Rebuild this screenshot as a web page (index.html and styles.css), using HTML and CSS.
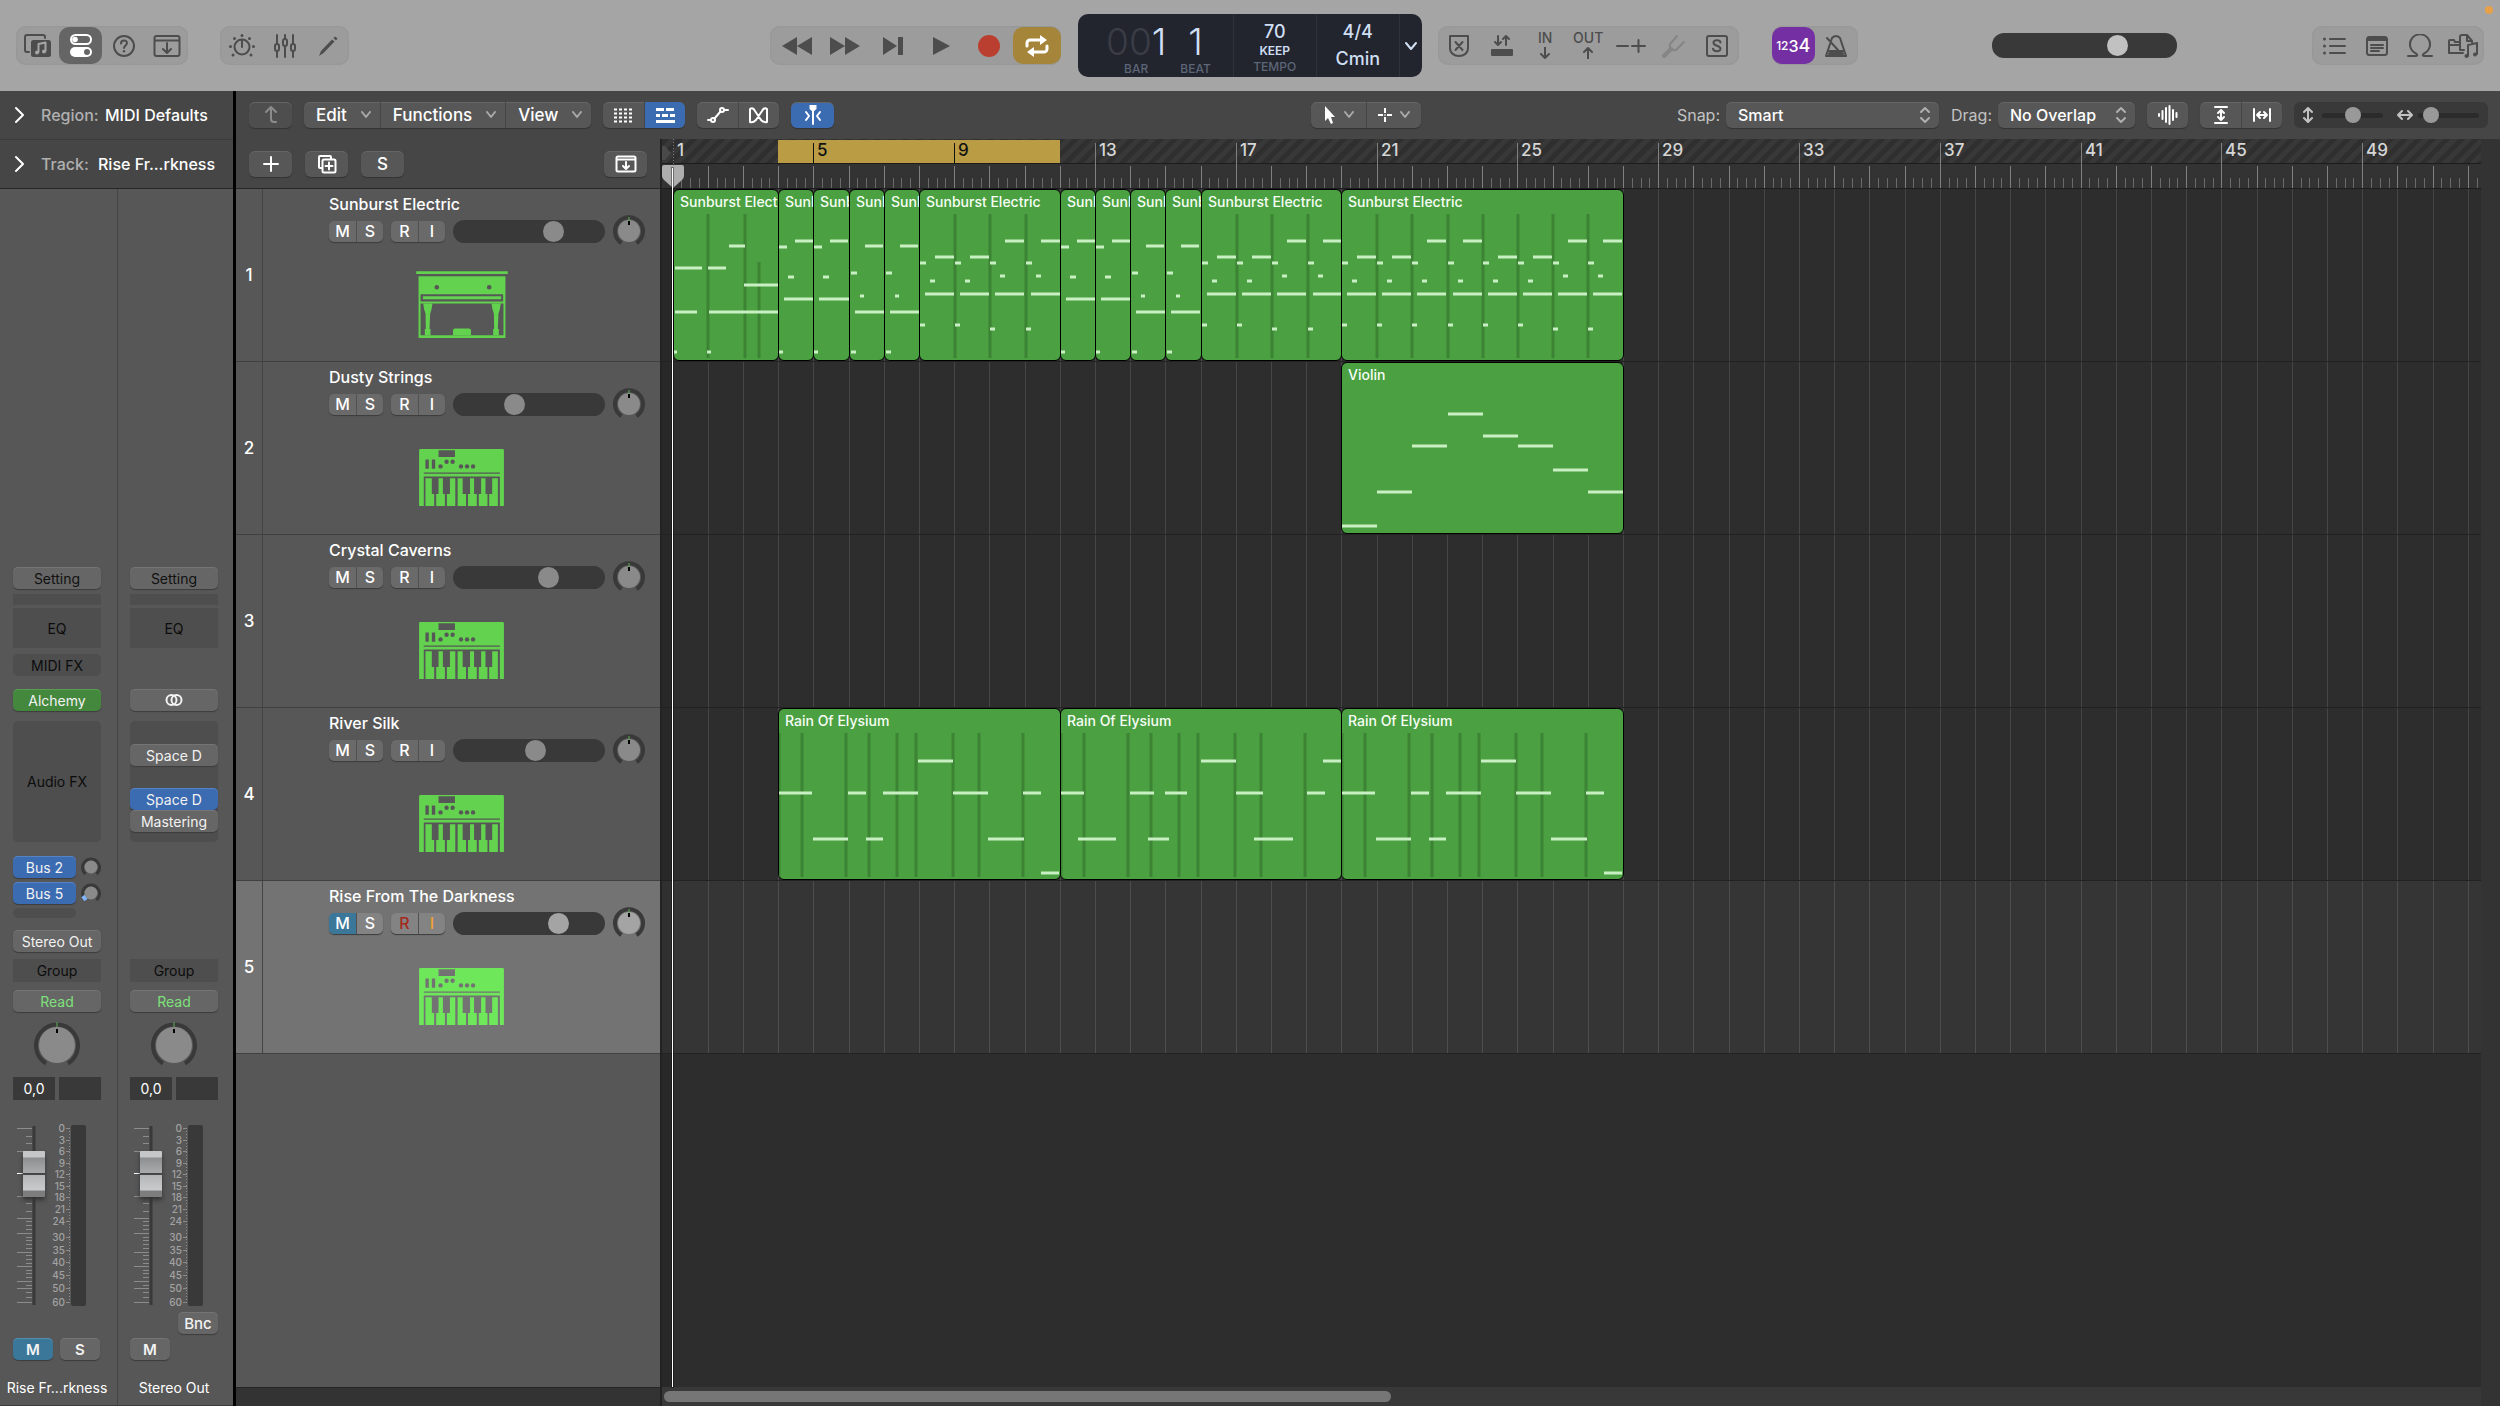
FILE: index.html
```html
<!DOCTYPE html>
<html lang="en">
<head>
  <meta charset="UTF-8">
  <meta name="viewport" content="width=device-width, initial-scale=1.0">
  <title>Tracks</title>
  <link rel="stylesheet" href="styles.css">
</head>
<body>
  <header class="control-bar">
    <div class="group">
      <button aria-label="Library">
        <svg class="icon" width="28" height="24" viewBox="0 0 28 24"><path d="M5 18H3a2 2 0 0 1-2-2V3a2 2 0 0 1 2-2h16a2 2 0 0 1 2 2v1"/><rect class="solid" x="7" y="6" width="20" height="17" rx="2.5"/><path class="knock" d="M14.5 18v-8l7-1.5V17"/><circle class="knock-fill" cx="13" cy="18.5" r="2"/><circle class="knock-fill" cx="20" cy="17.5" r="2"/></svg>
      </button>
      <button class="active" aria-label="Inspector">
        <svg class="icon" width="24" height="24" viewBox="0 0 24 24"><rect x="2" y="1" width="20" height="9" rx="4.5"/><circle class="solid" cx="6" cy="5.5" r="2.8"/><rect class="solid" x="1" y="13" width="22" height="10" rx="5"/><circle class="knock-fill" cx="18" cy="18" r="3"/></svg>
      </button>
      <button aria-label="Quick Help">
        <svg class="icon" width="24" height="24" viewBox="0 0 24 24"><circle cx="12" cy="12" r="10"/><path d="M9 9.5c0-4 6-4 6-.5 0 2.3-3 2.5-3 5"/><circle class="solid" cx="12" cy="17.2" r="1.2"/></svg>
      </button>
      <button aria-label="Toolbar">
        <svg class="icon" width="28" height="24" viewBox="0 0 28 24"><rect x="1.5" y="2" width="25" height="20" rx="2"/><path d="M2 6.5h24M14 9v10M10 15l4 4 4-4"/></svg>
      </button>
    </div>
    <div class="group group-second">
      <button aria-label="Smart Controls">
        <svg class="icon" width="28" height="24" viewBox="0 0 28 24"><circle cx="14" cy="13" r="7.5"/><path d="M14 13V6"/><path class="dots" d="M14 1.5v0M6.5 4.5v0M21.5 4.5v0M2.5 12.5v0M25.5 12.5v0M5 21v0M23 21v0"/></svg>
      </button>
      <button aria-label="Mixer">
        <svg class="icon" width="24" height="24" viewBox="0 0 24 24"><path d="M4 1v9M4 17v6M12 1v4M12 12v11M20 1v9M20 17v6"/><rect x="2" y="10" width="4" height="7" rx="2"/><rect x="10" y="5" width="4" height="7" rx="2"/><rect x="18" y="10" width="4" height="7" rx="2"/></svg>
      </button>
      <button aria-label="Editors">
        <svg class="icon" width="24" height="24" viewBox="0 0 24 24"><path class="solid" d="M3 22l2-5L16 5.5l2.5 2L7.5 19zM17.5 4l1.500-1.5 2.5 2L20 6.5z"/></svg>
      </button>
    </div>
    <div class="space space-wide"></div>
    <div class="group transport">
      <button aria-label="Rewind"><svg class="icon" width="30" height="20" viewBox="0 0 30 20"><path class="solid" d="M15 1v18L0 10zM30 1v18L15 10z"/></svg></button>
      <button aria-label="Forward"><svg class="icon" width="30" height="20" viewBox="0 0 30 20"><path class="solid" d="M0 1v18l15-9zM15 1v18l15-9z"/></svg></button>
      <button aria-label="Go to End"><svg class="icon" width="22" height="20" viewBox="0 0 22 20"><path class="solid" d="M1 1v18l14-9zM16 1h5v18h-5z"/></svg></button>
      <button aria-label="Play"><svg class="icon" width="18" height="20" viewBox="0 0 18 20"><path class="solid" d="M1 1v18l17-9z"/></svg></button>
      <button aria-label="Record"><svg width="22" height="22" viewBox="0 0 22 22"><circle cx="11" cy="11" r="11" fill="#bb3f30"/></svg></button>
      <button class="cycle" aria-label="Cycle"><svg class="icon heavy" width="26" height="22" viewBox="0 0 26 22"><path d="M3 11V8a3 3 0 0 1 3-3h11M23 11v3a3 3 0 0 1-3 3H9"/><path class="solid" d="M16 0l7 5-7 5zM10 12l-7 5 7 5z"/></svg></button>
    </div>
    <div class="lcd">
      <div class="lcd-position">
        <div class="lcd-field"><b><i>00</i>1</b><span>BAR</span></div>
        <div class="lcd-field"><b>1</b><span>BEAT</span></div>
      </div>
      <div class="lcd-tempo"><b>70</b><em>KEEP</em><span>TEMPO</span></div>
      <div class="lcd-key"><b>4/4</b><b>Cmin</b></div>
      <button class="lcd-menu" aria-label="Display Mode"><svg class="icon" width="14" height="10" viewBox="0 0 14 10"><path d="M2 2l5 6 5-6"/></svg></button>
    </div>
    <div class="group group-modes">
      <button aria-label="Replace"><svg class="icon" width="24" height="24" viewBox="0 0 24 24"><path d="M3 2h18v12c0 5-4 8-9 8s-9-3-9-8zM8.5 8l7 8M15.5 8l-7 8"/></svg></button>
      <button aria-label="Autopunch"><svg class="icon" width="24" height="24" viewBox="0 0 24 24"><path d="M8 2v9M5 8l3 3 3-3M16 11V2M13 5l3-3 3 3"/><rect class="solid" x="1" y="15" width="22" height="7" rx="1"/></svg></button>
      <button class="text-icon">IN<svg class="icon" width="12" height="12" viewBox="0 0 12 12"><path d="M6 0v11M2 7l4 4 4-4"/></svg></button>
      <button class="text-icon">OUT<svg class="icon" width="12" height="12" viewBox="0 0 12 12"><path d="M6 12V1M2 5l4-4 4 4"/></svg></button>
      <button aria-label="Varispeed"><svg class="icon" width="30" height="24" viewBox="0 0 30 24"><path d="M1 12h11M16 12h13M22.5 6v12"/></svg></button>
      <button class="dim" aria-label="Tuner"><svg class="icon" width="24" height="24" viewBox="0 0 24 24"><path d="M9 15l-1-2q-1-2 1-4l6-7M9 15l2 1q2 1 4-1l7-7"/><path class="thick" d="M2 22l7-7"/></svg></button>
      <button aria-label="Solo"><svg class="icon" width="24" height="24" viewBox="0 0 24 24"><rect x="2" y="2" width="20" height="20" rx="2"/><path d="M15.5 8.5c-.5-3-7-3-7 .2 0 3.5 7 2.5 7 6 0 3.5-7 3.3-7.5 0"/></svg></button>
    </div>
    <div class="group group-click">
      <button class="count-in" aria-label="Count In"><small>12</small>3<big>4</big></button>
      <button aria-label="Metronome"><svg class="icon" width="24" height="24" viewBox="0 0 24 24"><path d="M2 22l6-18q4-4 8 0l6 18zM4 17h16M14 16L3 4"/><path class="thick" d="M6 20h12"/></svg></button>
    </div>
    <div class="space"></div>
    <input class="volume master" type="range" aria-label="Master Volume" value="70">
    <div class="space"></div>
    <div class="group">
      <button aria-label="List Editors"><svg class="icon" width="24" height="20" viewBox="0 0 24 20"><path d="M8 3h15M8 10h15M8 17h15"/><path class="dots" d="M2.5 3v0M2.5 10v0M2.5 17v0"/></svg></button>
      <button aria-label="Note Pad"><svg class="icon" width="24" height="24" viewBox="0 0 24 24"><rect x="2" y="3" width="20" height="18" rx="2.5"/><path class="solid" d="M2 3h20v4H2z"/><path d="M6 11h12M6 14h12M6 17h8"/></svg></button>
      <button aria-label="Loop Browser"><svg class="icon" width="26" height="24" viewBox="0 0 26 24"><path d="M1 22h7q4 0 1-2.5a10 10 0 1 1 8 0q-3 2.5 1 2.5h7"/></svg></button>
      <button aria-label="Browsers"><svg class="icon" width="32" height="26" viewBox="0 0 32 26"><path d="M12 9H8L7 7H3a1 1 0 0 0-1 1v12h14M2 12h10M13 17V4a2 2 0 0 1 2-2h5l5 6v2M20 2v6h5M13 17h4M21 23v-11l9-2v11"/><circle class="solid" cx="19.5" cy="23" r="2"/><circle class="solid" cx="28" cy="21.5" r="2"/></svg></button>
    </div>
    <span class="mic-dot"></span>
  </header>

  <div class="workspace">
    <aside class="inspector">
      <button class="disclosure"><svg class="icon" width="10" height="18" viewBox="0 0 10 18"><path d="M1 2l7 7-7 7"/></svg><span>Region:</span> MIDI Defaults</button>
      <button class="disclosure"><svg class="icon" width="10" height="18" viewBox="0 0 10 18"><path d="M1 2l7 7-7 7"/></svg><span class="track-label">Track:</span> Rise Fr...rkness</button>
      <div class="strips">
        <section class="strip">
          <button class="slot setting">Setting</button>
          <div class="gain-meter"></div>
          <button class="well eq">EQ</button>
          <button class="slot well midi-fx">MIDI FX</button>
          <button class="slot instrument green">Alchemy</button>
          <button class="well audio-fx">Audio FX</button>
          <div class="sends">
            <button class="slot blue">Bus 2</button>
            <svg width="20" height="20" viewBox="0 0 20 20"><path class="ring" d="M4.5 17A8.5 8.5 0 1 1 15.5 17"/><circle class="cap" cx="10" cy="10" r="6.5"/></svg>
            <button class="slot blue">Bus 5</button>
            <svg width="20" height="20" viewBox="0 0 20 20"><path class="ring" d="M4.5 17A8.5 8.5 0 1 1 15.5 17"/><path class="ring-lit" d="M5 17L2 13"/><circle class="cap" cx="10" cy="10" r="6.5"/></svg>
            <div class="well empty-send"></div>
          </div>
          <button class="slot output">Stereo Out</button>
          <button class="well group-slot">Group</button>
          <button class="slot read">Read</button>
          <svg class="pan" width="46" height="46" viewBox="0 0 46 46"><path class="ring wide" d="M12 41.5A21 21 0 1 1 34 41.5"/><circle class="cap" cx="23" cy="23" r="18"/><path class="center-mark" d="M23 0v5"/><path class="needle" d="M23 7v4"/></svg>
          <div class="readouts"><output>0,0</output><output></output></div>
          <div class="fader-row"></div>
          <div class="bounce-row"></div>
          <div class="mute-row"><button class="slot teal">M</button><button class="slot">S</button></div>
          <p class="strip-name">Rise Fr...rkness</p>
        </section>
        <section class="strip">
          <button class="slot setting">Setting</button>
          <div class="gain-meter"></div>
          <button class="well eq">EQ</button>
          <div class="midi-fx"></div>
          <button class="slot instrument" aria-label="Stereo"><svg class="icon" width="18" height="12" viewBox="0 0 18 12"><circle cx="6.5" cy="6" r="5"/><circle cx="11.5" cy="6" r="5"/></svg></button>
          <div class="well audio-fx inserts">
            <button class="slot">Space D</button>
            <button class="slot blue second">Space D</button>
            <button class="slot">Mastering</button>
          </div>
          <div class="sends"></div>
          <div class="output"></div>
          <button class="well group-slot">Group</button>
          <button class="slot read">Read</button>
          <svg class="pan" width="46" height="46" viewBox="0 0 46 46"><path class="ring wide" d="M12 41.5A21 21 0 1 1 34 41.5"/><circle class="cap" cx="23" cy="23" r="18"/><path class="center-mark" d="M23 0v5"/><path class="needle" d="M23 7v4"/></svg>
          <div class="readouts"><output>0,0</output><output></output></div>
          <div class="fader-row"></div>
          <div class="bounce-row"><button class="slot">Bnc</button></div>
          <div class="mute-row"><button class="slot">M</button></div>
          <p class="strip-name">Stereo Out</p>
        </section>
      </div>
    </aside>

    <main class="tracks-area">
      <div class="menu-bar">
        <button class="tool single faded" aria-label="Up"><svg class="icon" width="20" height="20" viewBox="0 0 20 20"><path d="M10 2v12q0 3 3 3h2M5 7l5-5 5 5"/></svg></button>
        <div class="tools menus">
          <button>Edit<svg class="icon" width="10" height="8" viewBox="0 0 10 8"><path d="M1 1l4 5 4-5"/></svg></button>
          <button>Functions<svg class="icon" width="10" height="8" viewBox="0 0 10 8"><path d="M1 1l4 5 4-5"/></svg></button>
          <button>View<svg class="icon" width="10" height="8" viewBox="0 0 10 8"><path d="M1 1l4 5 4-5"/></svg></button>
        </div>
        <div class="tools">
          <button aria-label="Grid View"><svg class="icon dashed" width="19" height="15" viewBox="0 0 19 15"><path d="M0 1.5h19M0 5.5h19M0 9.5h19M0 13.5h19"/></svg></button>
          <button class="on" aria-label="Track View"><svg class="icon rows" width="19" height="15" viewBox="0 0 19 15"><path d="M0 1.5h8M10 1.5h8M0 7.5h4M6 7.5h6M14 7.5h5M0 13.5h19"/></svg></button>
        </div>
        <div class="tools">
          <button aria-label="Automation"><svg class="icon" width="22" height="18" viewBox="0 0 22 18"><circle cx="6" cy="14" r="2"/><circle cx="15" cy="4" r="2"/><path d="M1 14h3M7.5 12.5l6-7M17 4h4"/></svg></button>
          <button aria-label="Flex"><svg class="icon" width="22" height="18" viewBox="0 0 22 18"><path d="M2 16V3q3-2 5 2l6 9q3 3 6 2V3q-3-2-5 2l-6 9q-3 3-6 2z"/></svg></button>
        </div>
        <button class="tool single on" aria-label="Catch Playhead"><svg class="icon" width="20" height="20" viewBox="0 0 20 20"><path class="solid" d="M6.5 0h7v4L10 7 6.5 4z"/><path d="M10 5v14M3 7l3 4-3 4M17 7l-3 4 3 4"/></svg></button>
        <div class="space space-left"></div>
        <div class="tools pointer-tools">
          <button aria-label="Left-click Tool"><svg width="12" height="20" viewBox="0 0 12 20"><path fill="#fff" d="M1 1v15l3-3 3 6 2-1-2-6h4z"/></svg><svg class="icon" width="10" height="8" viewBox="0 0 10 8"><path d="M1 1l4 5 4-5"/></svg></button>
          <button aria-label="Command-click Tool"><svg class="icon bright" width="14" height="14" viewBox="0 0 14 14"><path d="M7 0v5M7 9v5M0 7h5M9 7h5M6.5 7h1"/></svg><svg class="icon" width="10" height="8" viewBox="0 0 10 8"><path d="M1 1l4 5 4-5"/></svg></button>
        </div>
        <div class="space space-right"></div>
        <label for="snap">Snap:</label>
        <div class="select-box snap">
          <select id="snap"><option>Smart</option></select>
          <svg class="icon" width="12" height="18" viewBox="0 0 12 18"><path d="M2 6l4-4 4 4M2 12l4 4 4-4"/></svg>
        </div>
        <label for="drag">Drag:</label>
        <div class="select-box drag">
          <select id="drag"><option>No Overlap</option></select>
          <svg class="icon" width="12" height="18" viewBox="0 0 12 18"><path d="M2 6l4-4 4 4M2 12l4 4 4-4"/></svg>
        </div>
        <button class="tool single waveform" aria-label="Waveform Zoom"><svg class="icon" width="20" height="20" viewBox="0 0 20 20"><path d="M1 9v2M4.5 6v8M8 3v14M11.5 1v18M15 5v10M18.5 8v4"/></svg></button>
        <div class="tools">
          <button aria-label="Fit Vertical"><svg class="icon" width="16" height="20" viewBox="0 0 16 20"><path d="M2 2h12M2 18h12M8 5v10M5 8l3-3 3 3M5 12l3 3 3-3"/></svg></button>
          <button aria-label="Fit Horizontal"><svg class="icon" width="20" height="14" viewBox="0 0 20 14"><path d="M2 1v12M18 1v12M5 7h10M8 4L5 7l3 3M12 4l3 3-3 3"/></svg></button>
        </div>
        <div class="zoomers">
          <label for="zoom-v" aria-label="Vertical Zoom"><svg class="icon" width="12" height="16" viewBox="0 0 12 16"><path d="M6 2v12M2 5l4-4 4 4M2 11l4 4 4-4"/></svg></label>
          <input id="zoom-v" type="range" value="52">
          <label for="zoom-h" aria-label="Horizontal Zoom"><svg class="icon" width="16" height="12" viewBox="0 0 16 12"><path d="M2 6h12M5 2L1 6l4 4M11 2l4 4-4 4"/></svg></label>
          <input id="zoom-h" type="range" value="10">
        </div>
      </div>

      <div class="headers">
        <div class="header-tools">
          <button class="tool single" aria-label="New Track"><svg class="icon" width="16" height="16" viewBox="0 0 16 16"><path d="M8 1v14M1 8h14"/></svg></button>
          <button class="tool single" aria-label="Duplicate Track"><svg class="icon" width="20" height="20" viewBox="0 0 20 20"><path d="M5 14H3a1 1 0 0 1-1-1V3a1 1 0 0 1 1-1h10a1 1 0 0 1 1 1v2"/><rect x="5.5" y="5.5" width="13" height="13" rx="1.5"/><path d="M12 8.5v7M8.5 12h7"/></svg></button>
          <button class="tool single">S</button>
          <button class="tool single header-config" aria-label="Track Header Components"><svg class="icon" width="22" height="18" viewBox="0 0 22 18"><rect x="1.5" y="1.5" width="19" height="15" rx="1.5"/><path d="M2 4.5h18M11 7v7M8 11l3 3 3-3"/></svg></button>
        </div>
        <div class="track-list" id="track-list"></div>
        <div class="headers-foot"></div>
      </div>

      <div class="timeline">
        <svg class="ruler" id="ruler" width="100%" height="50"></svg>
        <div class="lanes" id="lanes"></div>
        <div class="playhead"><svg width="24" height="24" viewBox="0 0 24 24"><path fill="#adadad" d="M3 1h18q2 0 2 2v9q0 2-2 4l-9 8-9-8q-2-2-2-4V3q0-2 2-2z"/></svg></div>
        <div class="scroll-row"><div class="scroll-thumb"></div></div>
      </div>
      <div class="side-scroll"></div>
    </main>
  </div>
  <script src="script.js"></script>
</body>
</html>
```

FILE: styles.css
```css
* {
  box-sizing: border-box;
}
body {
  margin: 0;
  min-height: 100vh;
  display: flex;
  flex-direction: column;
  background: #2d2d2d;
  color: #fff;
  font-family: Inter, "Liberation Sans", sans-serif;
  font-size: 17px;
  font-weight: 500;
  overflow: hidden;
}
button,
select {
  margin: 0;
  padding: 0;
  border: none;
  background: none;
  color: inherit;
  font: inherit;
}
svg {
  display: block;
  flex: none;
}
.icon {
  fill: none;
  stroke: currentColor;
  stroke-width: 2;
  stroke-linecap: round;
  stroke-linejoin: round;
}
.icon .solid {
  fill: currentColor;
  stroke: none;
}
.icon .dots {
  stroke-width: 3;
}
.icon .thick {
  stroke-width: 4;
}

/* control bar */
.control-bar {
  position: relative;
  display: flex;
  align-items: center;
  height: 91px;
  padding: 0 16px;
  background: #a5a5a5;
}
.group {
  display: flex;
  height: 39px;
  background: #9c9c9c;
  border-radius: 10px;
  box-shadow: inset 0 0 2px #8e8e8e;
}
.group button {
  width: 43px;
  margin: 1px 0;
  display: flex;
  align-items: center;
  justify-content: center;
  border-radius: 10px;
  color: #4d4d4d;
}
.group .active {
  background: #656565;
  color: #fff;
}
.knock {
  stroke: #a5a5a5;
}
.knock-fill {
  fill: #a5a5a5;
  stroke: none;
}
.active .knock-fill {
  fill: #656565;
}
.group-second {
  margin-left: 32px;
}
.group.transport {
  padding-left: 3px;
}
.group.transport button {
  width: 48px;
}
.group .cycle {
  background: #a5853a;
  color: #fff;
}
.heavy {
  stroke-width: 3;
}
.group .dim {
  color: #858585;
}
.group .text-icon {
  flex-direction: column;
  gap: 3px;
  font-size: 14px;
  line-height: 12px;
}
.group-modes {
  margin: 0 33px 0 16px;
}
.group .count-in {
  background: #7430a3;
  color: #fff;
  font-size: 16px;
}
.count-in small {
  font-size: 12px;
}
.count-in big {
  font-size: 18px;
}
.space {
  flex: 8;
}
.space-wide {
  flex: 25;
}
.mic-dot {
  position: absolute;
  top: 6px;
  right: 7px;
  width: 8px;
  height: 8px;
  border-radius: 50%;
  background: #e8a049;
}

/* display */
.lcd {
  display: flex;
  height: 63px;
  margin-left: 17px;
  border-radius: 10px;
  background: #23252e;
  color: #cfdff3;
  text-align: center;
}
.lcd > * {
  border-right: 1px solid #30323b;
}
.lcd i,
.lcd em {
  font-style: normal;
}
.lcd span {
  color: #5c6678;
  font-size: 12px;
  line-height: 16px;
}
.lcd-position {
  display: flex;
  justify-content: flex-end;
  gap: 14px;
  width: 156px;
  padding: 9px 22px 0 0;
}
.lcd-field {
  display: flex;
  flex-direction: column;
}
.lcd-field b {
  font-size: 37px;
  font-weight: 300;
  line-height: 38px;
}
.lcd-field i {
  color: #3a3c46;
}
.lcd-tempo,
.lcd-key {
  display: flex;
  flex-direction: column;
  width: 83px;
  padding-top: 7px;
}
.lcd-tempo b,
.lcd-key b {
  font-size: 18px;
  font-weight: 500;
  line-height: 22px;
}
.lcd-key {
  gap: 5px;
}
.lcd-tempo em {
  font-size: 12px;
  font-weight: 600;
  line-height: 16px;
}
.lcd > .lcd-menu {
  width: 22px;
  display: flex;
  align-items: center;
  justify-content: center;
  border: none;
}

/* sliders */
input[type="range"] {
  appearance: none;
  margin: 0;
  background: none;
}
.volume {
  width: 152px;
  height: 23px;
  padding: 0 1px;
  border-radius: 12px;
}
input.volume {
  background: #393939;
}
.volume::-webkit-slider-thumb {
  appearance: none;
  width: 21px;
  height: 21px;
  border-radius: 50%;
  background: #8a8a8a;
}
input.master {
  width: 185px;
  height: 25px;
}
.master::-webkit-slider-thumb {
  background: #c1c1c1;
}

/* inspector */
.workspace {
  flex: 1;
  display: flex;
}
.inspector {
  width: 236px;
  border-right: 3px solid #000;
  background: #575757;
  display: flex;
  flex-direction: column;
}
.disclosure {
  display: flex;
  align-items: center;
  height: 49px;
  padding-left: 15px;
  background: #464646;
  border-bottom: 1px solid #3c3c3c;
  font-size: 16px;
}
.disclosure + .disclosure {
  border-bottom-color: #262626;
}
.disclosure span {
  width: 64px;
  margin-left: 16px;
  color: #b0b0b0;
  text-align: left;
}
.disclosure .track-label {
  width: 57px;
}
.strips {
  flex: 1;
  display: flex;
  border-bottom: 1px solid #3c3c3c;
}
.strip {
  flex: 1;
  display: flex;
  flex-direction: column;
  justify-content: flex-end;
  padding: 0 16px 0 13px;
  font-size: 14px;
  font-weight: 400;
}
.strip + .strip {
  padding: 0 17px 0 12px;
  border-left: 1px solid #454545;
}
.slot {
  display: flex;
  align-items: center;
  justify-content: center;
  height: 22px;
  border-radius: 5px;
  background: #666;
  box-shadow: inset 0 1px #747474, 0 1px 1px #3c3c3c;
  color: #f2f2f2;
}
.well {
  background: #4e4e4e;
  box-shadow: none;
  border-radius: 5px;
  color: #0c0c0c;
}
.green {
  background: #43883d;
  box-shadow: inset 0 1px #5a9e54, 0 1px 1px #3c3c3c;
}
.blue {
  background: #3b6bb1;
  box-shadow: inset 0 1px #5683c4, 0 1px 1px #3c3c3c;
}
.teal {
  background: #3b7799;
  box-shadow: inset 0 1px #558eae, 0 1px 1px #3c3c3c;
}
.setting {
  color: #111;
}
.gain-meter {
  height: 11px;
  margin-top: 5px;
  background: #4e4e4e;
}
.eq {
  height: 40px;
  margin-top: 3px;
  border-radius: 1px;
}
.midi-fx {
  height: 22px;
  margin-top: 6px;
}
.instrument {
  margin-top: 13px;
}
.audio-fx {
  height: 121px;
  margin-top: 10px;
}
.inserts {
  padding-top: 23px;
}
.inserts .slot {
  width: 100%;
}
.inserts .second {
  margin-top: 22px;
}
.sends {
  display: grid;
  grid-template-columns: 63px 20px;
  grid-template-rows: 22px 22px 10px;
  gap: 4px 5px;
  align-items: center;
  height: 62px;
  margin-top: 14px;
}
.empty-send {
  height: 10px;
}
.output {
  height: 22px;
  margin-top: 12px;
}
.group-slot {
  height: 23px;
  margin-top: 7px;
  border-radius: 1px;
}
.read {
  margin-top: 8px;
  color: #7fe07b;
}
.ring {
  fill: none;
  stroke: #393939;
  stroke-width: 3;
}
.ring.wide {
  stroke-width: 4;
}
.ring-lit {
  stroke: #7fb4ff;
  stroke-width: 4;
}
.cap {
  fill: #8a8a8a;
}
.center-mark {
  stroke: #5fae58;
  stroke-width: 1;
}
.needle {
  stroke: #000;
  stroke-width: 2;
}
.pan {
  align-self: center;
  margin-top: 10px;
}
.readouts {
  display: grid;
  grid-template-columns: 1fr 1fr;
  gap: 4px;
  margin-top: 9px;
}
.readouts output {
  height: 23px;
  background: #393939;
  line-height: 23px;
  text-align: center;
}
.fader-row {
  display: grid;
  grid-template-columns: 4px 6px 22px 52px;
  height: 182px;
  margin-top: 25px;
}
.fader-scale {
  grid-area: 1 / 2 / 2 / 4;
}
.fader {
  grid-area: 1 / 3 / 2 / 4;
  writing-mode: vertical-lr;
  direction: rtl;
  width: 22px;
  height: 182px;
}
.fader::-webkit-slider-thumb {
  appearance: none;
  width: 22px;
  height: 46px;
  border-radius: 1px;
  background: linear-gradient(#c4c6c8 0 12%, #8d8f90 16%, #a9abac 47%, #444 48% 51%, #b4b6b8 53%, #c8cacc 84%, #7d7d7d 88%);
  box-shadow: 0 3px 4px #333;
}
.meter {
  grid-area: 1 / 4 / 2 / 5;
  overflow: visible;
}
.ticks {
  stroke: #8c8c8c;
}
.meter text {
  fill: #a2a2a2;
  font-size: 10px;
  font-weight: 500;
  text-anchor: end;
}
.bounce-row {
  display: flex;
  justify-content: flex-end;
  height: 22px;
  margin-top: 5px;
}
.bounce-row .slot {
  width: 40px;
  font-size: 15px;
  font-weight: 500;
}
.mute-row {
  display: flex;
  gap: 7px;
  margin-top: 4px;
}
.mute-row .slot {
  width: 40px;
  font-size: 15px;
  font-weight: 600;
}
.strip-name {
  height: 45px;
  margin: 0 -8px;
  padding-top: 4px;
  line-height: 48px;
  text-align: center;
  white-space: nowrap;
}

/* menu bar */
.tracks-area {
  flex: 1;
  display: grid;
  grid-template-columns: 424px 1fr 19px;
  grid-template-rows: 48px 1fr;
}
.menu-bar {
  grid-column: 1 / 4;
  display: flex;
  align-items: center;
  gap: 12px;
  padding: 0 12px 0 13px;
  background: #464646;
}
.menu-bar .space {
  margin-right: -12px;
}
.menu-bar .space-left {
  flex: 40;
}
.menu-bar .space-right {
  flex: 21;
}
.menu-bar label {
  color: #c2c2c2;
  font-size: 16px;
  font-weight: 400;
}
.tool,
.tools,
.select-box {
  height: 26px;
  border-radius: 6px;
  background: #575757;
  box-shadow: inset 0 1px #656565, 0 1px 1px #333;
}
.single {
  width: 43px;
  display: flex;
  align-items: center;
  justify-content: center;
}
.waveform {
  width: 41px;
}
.faded {
  color: #8c8c8c;
  background: #4e4e4e;
}
.tools {
  display: flex;
}
.tools button {
  width: 41px;
  display: flex;
  align-items: center;
  justify-content: center;
}
.tools button + button {
  border-left: 1px solid #464646;
}
.tools button:last-child {
  border-radius: 0 6px 6px 0;
}
.on,
.tools .on {
  background: #3b6bb1;
}
.menus button {
  width: auto;
  gap: 14px;
  padding: 0 9px 0 12px;
  font-size: 17px;
}
.menus .icon,
.pointer-tools .icon {
  color: #a9a9a9;
}
.pointer-tools .bright {
  color: #fff;
  stroke-linecap: butt;
}
.pointer-tools button {
  width: 55px;
  gap: 8px;
}
.dashed {
  stroke-width: 2;
  stroke-dasharray: 3 2;
  stroke-linecap: butt;
}
.rows {
  stroke-width: 3;
  stroke-linecap: butt;
}
.select-box {
  display: grid;
  grid-template-columns: 1fr 24px;
  align-items: center;
  margin-left: -6px;
  color: #b0b0b0;
}
.select-box select {
  grid-area: 1 / 1 / 2 / 3;
  height: 26px;
  padding-left: 12px;
  appearance: none;
  color: #fff;
  font-size: 16px;
}
.select-box .icon {
  grid-area: 1 / 2 / 2 / 3;
  margin-left: 4px;
  pointer-events: none;
}
.snap {
  width: 213px;
}
.drag {
  width: 137px;
}
.zoomers {
  display: grid;
  grid-template-columns: 28px 69px 27px 61px;
  align-items: center;
  height: 26px;
  border-radius: 6px;
  background: #393939;
  padding-right: 9px;
}
.zoomers label {
  display: flex;
  justify-content: center;
}
.zoomers input {
  width: 61px;
  height: 16px;
}
.zoomers input::-webkit-slider-runnable-track {
  height: 5px;
  border-radius: 3px;
  background: #2b2b2b;
}
.zoomers input::-webkit-slider-thumb {
  appearance: none;
  width: 16px;
  height: 16px;
  margin-top: -6px;
  border-radius: 50%;
  background: #999;
}

/* track headers */
.headers {
  display: flex;
  flex-direction: column;
  background: #575757;
}
.header-tools {
  display: flex;
  align-items: center;
  gap: 13px;
  height: 50px;
  padding: 0 13px;
  background: #464646;
  border-bottom: 1px solid #262626;
}
.header-config {
  margin-left: auto;
}
.track-list {
  flex: 1;
}
.headers-foot {
  height: 19px;
  background: #333;
  border-top: 1px solid #262626;
}
.track {
  display: grid;
  grid-template-columns: 27px 1fr;
  height: 173px;
  border-bottom: 1px solid #404040;
}
.track.selected {
  background: #737373;
}
.track-number {
  display: flex;
  align-items: center;
  justify-content: center;
  border-right: 1px solid #444;
  font-size: 17px;
}
.track-name {
  margin: 5px 0 0 66px;
  font-size: 16px;
  line-height: 20px;
}
.track-controls {
  display: flex;
  align-items: center;
  gap: 8px;
  height: 32px;
  margin: 1px 0 0 66px;
}
.pair {
  display: flex;
  height: 21px;
  border-radius: 5px;
  overflow: hidden;
  background: #6a6a6a;
  box-shadow: 0 1px 1px #3c3c3c;
}
.pair button {
  width: 27px;
  font-size: 16px;
  font-weight: 500;
  line-height: 21px;
}
.pair button + button {
  border-left: 1px solid #515151;
}
.selected .pair {
  background: #838383;
}
.selected .mute {
  background: #3b7799;
}
.selected .record {
  color: #a52a1c;
}
.selected .monitor {
  color: #f0a030;
}
.selected .volume::-webkit-slider-thumb {
  background: #a4a4a4;
}
.selected .cap {
  fill: #a4a4a4;
}
.track-icon {
  display: flex;
  align-items: center;
  justify-content: center;
  height: 114px;
  color: #62d24f;
  fill: currentColor;
}
.selected .track-icon {
  color: #6ee85a;
}
.holes {
  fill: #575757;
}
.selected .holes {
  fill: #737373;
}

/* timeline */
.timeline {
  position: relative;
  display: flex;
  flex-direction: column;
  min-width: 0;
  background: #2d2d2d;
  border-left: 2px solid #222;
  overflow: hidden;
}
.ruler {
  background:
    linear-gradient(#1c1c1c, #1c1c1c) 0 24px / 100% 1px no-repeat,
    linear-gradient(#1c1c1c, #1c1c1c) 0 49px / 100% 1px no-repeat,
    linear-gradient(#333, #333) 0 25px / 100% 25px no-repeat,
    repeating-linear-gradient(135deg, #2f2f2f 0 5px, #383838 5px 10px);
}
.ruler text {
  fill: #d6d6d6;
  font-size: 17px;
}
.ruler .in-cycle {
  fill: #111;
}
.lanes {
  flex: 1;
  position: relative;
}
.grid-lines {
  position: absolute;
  top: 0;
  left: 0;
}
.lane {
  position: relative;
  height: 173px;
  border-bottom: 1px solid #222;
}
.lane.selected {
  background: #ffffff0a;
}
.region {
  position: absolute;
  top: 0;
  height: 172px;
  border: 1px solid #000;
  border-radius: 6px;
  background: #4ba041;
  overflow: hidden;
}
.region-name {
  position: relative;
  padding: 2px 0 0 6px;
  font-size: 14px;
  line-height: 20px;
  white-space: nowrap;
  overflow: hidden;
  color: #f6fdf5;
}
.region svg {
  position: absolute;
  top: 0;
  left: 0;
}
.note {
  stroke: #c9f0c4;
  stroke-width: 3;
}
.marker {
  stroke: #3d8335;
  stroke-width: 3;
}
.playhead {
  position: absolute;
  top: 25px;
  bottom: 19px;
  left: -1px;
}
.playhead::after {
  content: "";
  position: absolute;
  top: 4px;
  bottom: 0;
  left: 11px;
  width: 1px;
  background: #fff;
  box-shadow: 0 0 0 1px #00000060;
}
.scroll-row {
  height: 19px;
  padding: 4px 0 0 2px;
  background: #383838;
}
.scroll-thumb {
  width: 40%;
  height: 11px;
  border-radius: 6px;
  background: #767676;
}
.side-scroll {
  background: #333;
}
```

FILE: script.js
```js
const BAR = 35.2;
const LAST_BAR = 52;

// left edge of a bar inside the timeline
function barX(bar) {
  return Math.floor(11 + (bar - 1) * BAR);
}

const keyboardIcon = `<svg width="85" height="57" viewBox="0 0 253 170">
  <path fill-rule="evenodd" d="M4 0H249Q253 0 253 4V170H241V82H14V170H0V4Q0 0 4 0zM58 4V24H107V4zM19 31V59H29V31zM38 31V59H48V31zM14 70V74H241V70z"/>
  <g class="holes"><circle cx="64" cy="52" r="6.5"/><circle cx="82" cy="38" r="6.5"/><circle cx="100" cy="38" r="6.5"/><circle cx="125" cy="52" r="6.5"/><circle cx="143" cy="52" r="6.5"/><circle cx="161" cy="52" r="6.5"/></g>
  <path d="M19 87H38V134H45V170H19zM58 87H71V134H77V170H51V134H58zM92 87H108V170H83V134H92zM115 87H130V134H140V170H115zM152 87H164V134H172V170H146V134H152zM185 87H198V134H204V170H178V134H185zM218 87H235V170H209V134H218z"/>
</svg>`;

const pianoIcon = `<svg width="92" height="67" viewBox="0 0 276 202">
  <path fill-rule="evenodd" d="M0 1H276V9H0zM7 16H269V202H7zM13 70V92H262V70zM13 98V194H263V98zM55 49a7 7 0 1 0 14 0a7 7 0 1 0-14 0zM213 49a7 7 0 1 0 14 0a7 7 0 1 0-14 0z"/>
  <path d="M20 76H256V85H20zM111 194V179Q111 173 117 173H159Q165 173 165 179V194zM21 98H49L46 116 42 128 40 175H43V194H26V175H29L28 128 24 116zM227 98H255L252 116 248 128 246 175H249V194H232V175H235L234 128 230 116z"/>
</svg>`;

const tracks = [
  { name: 'Sunburst Electric', volume: 69, icon: pianoIcon },
  { name: 'Dusty Strings', volume: 39, icon: keyboardIcon },
  { name: 'Crystal Caverns', volume: 65, icon: keyboardIcon },
  { name: 'River Silk', volume: 55, icon: keyboardIcon },
  { name: 'Rise From The Darkness', volume: 73, icon: keyboardIcon, selected: true }
];

// notes are [x, y, width]
const intro = [[1, 78, 27], [34, 78, 18], [55, 56, 16], [70, 95, 34], [1, 122, 22], [35, 122, 69], [0, 162, 3], [33, 162, 4]];
const riffHigh = [[0, 57, 8], [16, 51, 18], [9, 87, 6], [5, 109, 30], [0, 162, 4]];
const riffLow = [[1, 83, 6], [15, 56, 18], [10, 106, 4], [5, 122, 29], [1, 162, 5]];

// one chord figure per bar, L or H picks its upper and lower voices
function chords(tops, lows) {
  const notes = [];
  for (let i = 0; i < tops.length; i++) {
    const x = Math.round(i * BAR);
    const small = tops[i] === 'L' || lows[i] === 'L' ? 91 : 86;
    notes.push([x, 73, 6], [x + 15, tops[i] === 'L' ? 67 : 51, 19]);
    notes.push([x + 10, small, 5], [x + 5, 104, 29], [x, lows[i] === 'L' ? 135 : 139, 5]);
  }
  return notes;
}

function everyBar(count) {
  const lines = [];
  for (let i = 1; i < count; i++) lines.push([Math.round(i * BAR)]);
  return lines;
}

const violin = [163, 129, 83, 51, 73, 83, 107, 129].map((y, i) => [Math.round(i * BAR), y, 35]);
const rain = [[0, 84, 33], [34, 130, 35], [69, 84, 18], [87, 130, 17], [104, 84, 35], [139, 52, 35], [174, 84, 35], [209, 130, 36], [244, 84, 18], [262, 164, 18]];
const rainTurn = [[0, 84, 23], [17, 130, 38], [69, 84, 24], [87, 130, 21], [104, 84, 22], [140, 52, 35], [175, 84, 27], [193, 130, 39], [246, 84, 18], [262, 52, 18]];
const rainLines = [[0], [23], [67], [90], [118], [137], [174], [200], [244]];

const sun = 'Sunburst Electric';
const regions = [
  [
    [1, 4, sun, intro, [[34], [71], [85, 72]]],
    [4, 5, sun, riffHigh, []],
    [5, 6, sun, riffHigh, []],
    [6, 7, sun, riffLow, []],
    [7, 8, sun, riffLow, []],
    [8, 12, sun, chords('LLHH', 'LLHH'), everyBar(4)],
    [12, 13, sun, riffHigh, []],
    [13, 14, sun, riffHigh, []],
    [14, 15, sun, riffLow, []],
    [15, 16, sun, riffLow, []],
    [16, 20, sun, chords('LLHH', 'LLHH'), everyBar(4)],
    [20, 28, sun, chords('LLHHLLHH', 'LLLLLLHH'), everyBar(8)]
  ],
  [[20, 28, 'Violin', violin, []]],
  [],
  [
    [4, 12, 'Rain Of Elysium', rain, rainLines],
    [12, 20, 'Rain Of Elysium', rainTurn, rainLines],
    [20, 28, 'Rain Of Elysium', rain, rainLines]
  ],
  []
];

function trackHtml(track, i) {
  return `<div class="track ${track.selected ? 'selected' : ''}">
    <div class="track-number">${i + 1}</div>
    <div>
      <div class="track-name">${track.name}</div>
      <div class="track-controls">
        <div class="pair"><button class="mute">M</button><button>S</button></div>
        <div class="pair"><button class="record">R</button><button class="monitor">I</button></div>
        <input class="volume" type="range" aria-label="${track.name} volume" value="${track.volume}">
        <svg class="knob" width="32" height="32" viewBox="0 0 32 32"><path class="ring wide" d="M8.5 28A14 14 0 1 1 23.5 28"/><circle class="cap" cx="16" cy="16" r="11"/><path class="center-mark" d="M16 2v4"/><path class="needle" d="M16 6v4"/></svg>
      </div>
      <div class="track-icon">${track.icon}</div>
    </div>
  </div>`;
}

function regionHtml([start, end, name, notes, lines]) {
  const left = barX(start);
  const width = barX(end) - left + 1;
  const noteLines = notes.map(([x, y, w]) => `<path class="note" d="M${x} ${y}h${w}"/>`).join('');
  const markers = lines.map(([x, y = 24]) => `<path class="marker" d="M${x} ${y}V168"/>`).join('');
  return `<div class="region" style="left:${left}px;width:${width}px">
    <svg width="${width}" height="171">${markers}${noteLines}</svg>
    <div class="region-name">${name}</div>
  </div>`;
}

function drawRuler() {
  const cycleStart = barX(4);
  let out = `<rect x="${cycleStart}" y="1" width="${barX(12) - cycleStart}" height="23" fill="#b99c43"/>`;
  out += '<path d="M-2 7h5l6 7-6 7h-5z" fill="#4a4a4a"/><path d="M11.5 0V25" stroke="#777" stroke-dasharray="1 2"/>';
  for (let bar = 0; bar <= LAST_BAR; bar++) {
    for (let beat = 0; beat < 4; beat++) {
      const x = Math.floor(11 + (bar - 1 + beat / 4) * BAR) + 0.5;
      if (x < 11) continue;
      out += `<path d="M${x} ${beat ? 39 : 27}V49" stroke="${beat ? '#6a6a6a' : '#808080'}"/>`;
    }
    if (bar % 4 === 1) {
      const x = barX(bar);
      const inCycle = bar >= 4 && bar < 12;
      if (bar > 1) out += `<path d="M${x + 0.5} 4V${inCycle ? 24 : 49}" stroke="${inCycle ? '#111' : '#808080'}"/>`;
      out += `<text x="${x + 4}" y="17" class="${inCycle ? 'in-cycle' : ''}">${bar}</text>`;
    }
  }
  document.getElementById('ruler').innerHTML = out;
}

function drawLanes() {
  const height = tracks.length * 173;
  let grid = '<rect width="10" height="2000" fill="#282828"/>';
  for (let bar = 2; bar <= LAST_BAR; bar++) {
    grid += `<path d="M${barX(bar) + 0.5} 0V${height}" stroke="#464646"/>`;
  }
  document.getElementById('lanes').innerHTML =
    `<svg class="grid-lines" width="100%" height="100%">${grid}</svg>` +
    regions.map((list, i) => `<div class="lane ${tracks[i].selected ? 'selected' : ''}">${list.map(regionHtml).join('')}</div>`).join('');
}

function faderHtml(label) {
  const long = [3, 26, 71, 93, 108, 127, 141, 156, 163, 177];
  const short = [11, 18, 78, 86, 96, 100, 104, 112, 115, 119, 123, 130, 134, 138, 145, 148, 152, 160, 167, 172];
  const scale = [[0, 3], [3, 15], [6, 26], [9, 38], [12, 49], [15, 61], [18, 72], [21, 84], [24, 96], [30, 112], [35, 125], [40, 137], [45, 150], [50, 163], [60, 177]];
  return `<svg class="fader-scale" width="28" height="182">
      <g class="ticks">
        ${long.map(y => `<path d="M0 ${y + 0.5}h15"/>`).join('')}
        ${short.map(y => `<path d="M9 ${y + 0.5}h6"/>`).join('')}
      </g>
      <path d="M0 48.5h6" stroke="#fff"/>
      <path d="M17 1V180" stroke="#393939" stroke-width="3"/>
    </svg>
    <input class="fader" type="range" aria-label="${label} fader" value="81">
    <svg class="meter" width="52" height="182">
      <g class="ticks">
        ${scale.map(([, y]) => `<path d="M21 ${y + 0.5}h4"/>`).join('')}
        <path d="M24.5 3V178" stroke-dasharray="1 2"/>
      </g>
      ${scale.map(([n, y]) => `<text x="20" y="${y + 4}">${n}</text>`).join('')}
      <rect x="26" width="15" height="181" rx="2" fill="#393939"/>
    </svg>`;
}

document.getElementById('track-list').innerHTML = tracks.map(trackHtml).join('');
document.querySelectorAll('.fader-row').forEach((row, i) => {
  row.innerHTML = faderHtml(i ? 'Stereo Out' : 'Channel');
});
drawRuler();
drawLanes();
```
